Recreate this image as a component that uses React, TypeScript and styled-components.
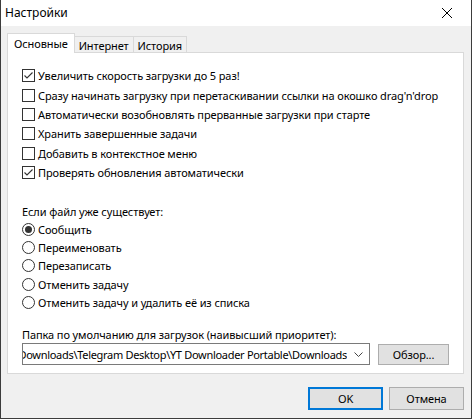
import React, { useState } from "react"
import styled, { createGlobalStyle } from "styled-components"

const GlobalStyle = createGlobalStyle`
    html, body {
        margin: 0;
        padding: 0;
        background: #ffffff;
    }
    body {
        font-family: "Noto Sans", "Liberation Sans", sans-serif;
        font-size: 11px;
        letter-spacing: -0.1px;
        color: #000000;
    }
`

const Window = styled.div`
    width: 472px;
    height: 419px;
    box-sizing: border-box;
    border: 1px solid #3c3c3c;
    border-top: none;
    background: #f0f0f0;
    display: flex;
    flex-direction: column;
`

const TitleBar = styled.div`
    height: 26px;
    flex: none;
    background: #ffffff;
    display: flex;
    align-items: center;
    justify-content: space-between;
    padding-left: 4px;
`

const Title = styled.span`
    font-size: 12px;
    letter-spacing: 0;
    line-height: 1;
`

const CloseButton = styled.div`
    width: 46px;
    height: 26px;
    display: flex;
    align-items: center;
    justify-content: center;
    margin-right: 1px;
`

const Body = styled.div`
    flex: 1;
    display: flex;
    flex-direction: column;
    padding: 7px 7px 0 6px;
`

const TabStrip = styled.div`
    display: flex;
    align-items: flex-end;
    height: 20px;
    position: relative;
    z-index: 1;
    margin-bottom: -1px;
`

const Tab = styled.div<{ $active?: boolean }>`
    box-sizing: border-box;
    height: ${(p) => (p.$active ? 20 : 17)}px;
    padding: 0 ${(p) => (p.$active ? 6 : 4)}px;
    margin-left: ${(p) => (p.$active ? 0 : -1)}px;
    display: flex;
    align-items: center;
    border: 1px solid #d9d9d9;
    border-bottom: ${(p) => (p.$active ? "none" : "1px solid #d9d9d9")};
    background: ${(p) => (p.$active ? "#ffffff" : "#f0f0f0")};
    padding-top: ${(p) => (p.$active ? 0 : 1)}px;
`

const Panel = styled.div`
    box-sizing: border-box;
    height: 322px;
    background: #ffffff;
    border: 1px solid #d9d9d9;
    padding: 13px 14px 0 14px;
    display: flex;
    flex-direction: column;
`

const OptionRow = styled.label`
    height: 19.4px;
    display: flex;
    align-items: center;
    gap: 3px;
    white-space: nowrap;
`

const RadioRow = styled(OptionRow)`
    height: 18.2px;
`

const Box = styled.span`
    width: 13px;
    height: 13px;
    box-sizing: border-box;
    border: 1px solid #333333;
    background: #ffffff;
    flex: none;
    display: flex;
    align-items: center;
    justify-content: center;
`

const Circle = styled.span`
    width: 13px;
    height: 13px;
    box-sizing: border-box;
    border: 1px solid #333333;
    border-radius: 50%;
    background: #ffffff;
    flex: none;
    display: flex;
    align-items: center;
    justify-content: center;
`

const Dot = styled.span`
    width: 7px;
    height: 7px;
    border-radius: 50%;
    background: #333333;
`

const GroupLabel = styled.div`
    margin-top: 20px;
    height: 18px;
    display: flex;
    align-items: center;
    white-space: nowrap;
`

const FolderLabel = styled(GroupLabel)`
    margin-top: 14px;
`

const FolderRow = styled.div`
    display: flex;
    align-items: center;
    gap: 8px;
`

const Combo = styled.div`
    box-sizing: border-box;
    width: 348px;
    height: 22px;
    border: 1px solid #7a7a7a;
    background: #ffffff;
    display: flex;
    align-items: center;
`

// long paths stay pinned to the right, the head gets clipped
const ComboText = styled.div`
    flex: 1;
    overflow: hidden;
    display: flex;
    justify-content: flex-end;
    white-space: nowrap;
    letter-spacing: -0.3px;
    padding-left: 2px;
`

const ComboArrow = styled.div`
    width: 22px;
    flex: none;
    display: flex;
    align-items: center;
    justify-content: center;
`

const Button = styled.div<{ $primary?: boolean }>`
    box-sizing: border-box;
    width: 73px;
    height: 21px;
    background: #e1e1e1;
    border: ${(p) => (p.$primary ? "2px solid #0078d7" : "1px solid #adadad")};
    display: flex;
    align-items: center;
    justify-content: center;
`

const Footer = styled.div`
    display: flex;
    justify-content: flex-end;
    gap: 6px;
    padding-top: 13px;
`

const FooterButton = styled(Button)`
    width: 75px;
    height: 23px;
`

const CheckMark = () => (
    <svg width="11" height="11" viewBox="0 0 11 11">
        <path d="M1.5 5.5 L4 8 L9.5 2.5" fill="none" stroke="#333" strokeWidth="1.1" />
    </svg>
)

const Checkbox: React.FC<{ label: string; checked?: boolean }> = ({ label, checked }) => {
    const [on, setOn] = useState(!!checked)
    return (
        <OptionRow onClick={() => setOn(!on)}>
            <Box>{on && <CheckMark />}</Box>
            <span>{label}</span>
        </OptionRow>
    )
}

const options = [
    { label: "Увеличить скорость загрузки до 5 раз!", checked: true },
    { label: "Сразу начинать загрузку при перетаскивании ссылки на окошко drag'n'drop" },
    { label: "Автоматически возобновлять прерванные загрузки при старте" },
    { label: "Хранить завершенные задачи" },
    { label: "Добавить в контекстное меню" },
    { label: "Проверять обновления автоматически", checked: true },
]

const actions = [
    "Сообщить",
    "Переименовать",
    "Перезаписать",
    "Отменить задачу",
    "Отменить задачу и удалить её из списка",
]

export default function App() {
    const [action, setAction] = useState(0)

    return (
        <Window>
            <GlobalStyle />
            <TitleBar>
                <Title>Настройки</Title>
                <CloseButton>
                    <svg width="10" height="10" viewBox="0 0 10 10">
                        <path d="M0 0 L10 10 M10 0 L0 10" stroke="#000" strokeWidth="1" />
                    </svg>
                </CloseButton>
            </TitleBar>

            <Body>
                <TabStrip>
                    <Tab $active>Основные</Tab>
                    <Tab>Интернет</Tab>
                    <Tab>История</Tab>
                </TabStrip>

                <Panel>
                    {options.map((o) => (
                        <Checkbox key={o.label} label={o.label} checked={o.checked} />
                    ))}

                    <GroupLabel>Если файл уже существует:</GroupLabel>
                    {actions.map((a, i) => (
                        <RadioRow key={a} onClick={() => setAction(i)}>
                            <Circle>{action === i && <Dot />}</Circle>
                            <span>{a}</span>
                        </RadioRow>
                    ))}

                    <FolderLabel>Папка по умолчанию для загрузок (наивысший приоритет):</FolderLabel>
                    <FolderRow>
                        <Combo>
                            <ComboText>C:\Users\User\Downloads\Telegram Desktop\YT Downloader Portable\Downloads</ComboText>
                            <ComboArrow>
                                <svg width="9" height="5" viewBox="0 0 9 5">
                                    <path d="M0.5 0.5 L4.5 4.5 L8.5 0.5" fill="none" stroke="#444" strokeWidth="1" />
                                </svg>
                            </ComboArrow>
                        </Combo>
                        <Button>Обзор...</Button>
                    </FolderRow>
                </Panel>

                <Footer>
                    <FooterButton $primary>OK</FooterButton>
                    <FooterButton>Отмена</FooterButton>
                </Footer>
            </Body>
        </Window>
    )
}
